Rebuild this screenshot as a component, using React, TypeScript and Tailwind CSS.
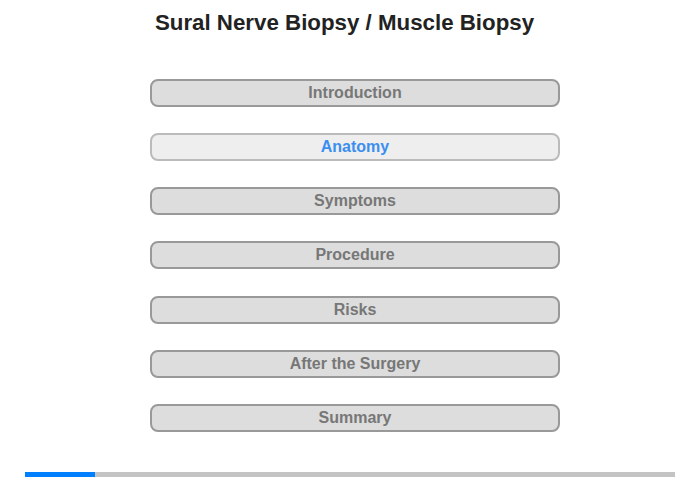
import React from "react";

const items = ["Introduction", "Anatomy", "Symptoms", "Procedure", "Risks", "After the Surgery", "Summary"];

export default function App() {
  return (
    <div className="w-[700px] h-[480px] bg-white flex flex-col items-center" style={{ fontFamily: '"Liberation Sans", Arial, sans-serif' }}>
      <h1 className="mt-[10px] h-[26px] leading-[26px] text-[22.3px] font-bold text-[#222222] ml-[-11px]">
        Sural Nerve Biopsy / Muscle Biopsy
      </h1>
      <div className="mt-[43px] flex flex-col gap-[26.17px] w-[410px] ml-[10px]">
        {items.map((t) => {
          const active = t === "Anatomy";
          return (
            <div
              key={t}
              className={
                "h-[28px] rounded-[8px] border-2 flex items-center justify-center text-[16px] font-bold " +
                (active ? "bg-[#eeeeee] border-[#bbbbbb] text-[#3a8ef0]" : "bg-[#dddddd] border-[#999999] text-[#777777]")
              }
            >
              {t}
            </div>
          );
        })}
      </div>
      <div className="mt-[40px] w-[650px] h-[5px] bg-[#c4c4c4] flex">
        <div className="w-[70px] h-full bg-[#0080ff]" />
      </div>
    </div>
  );
}
